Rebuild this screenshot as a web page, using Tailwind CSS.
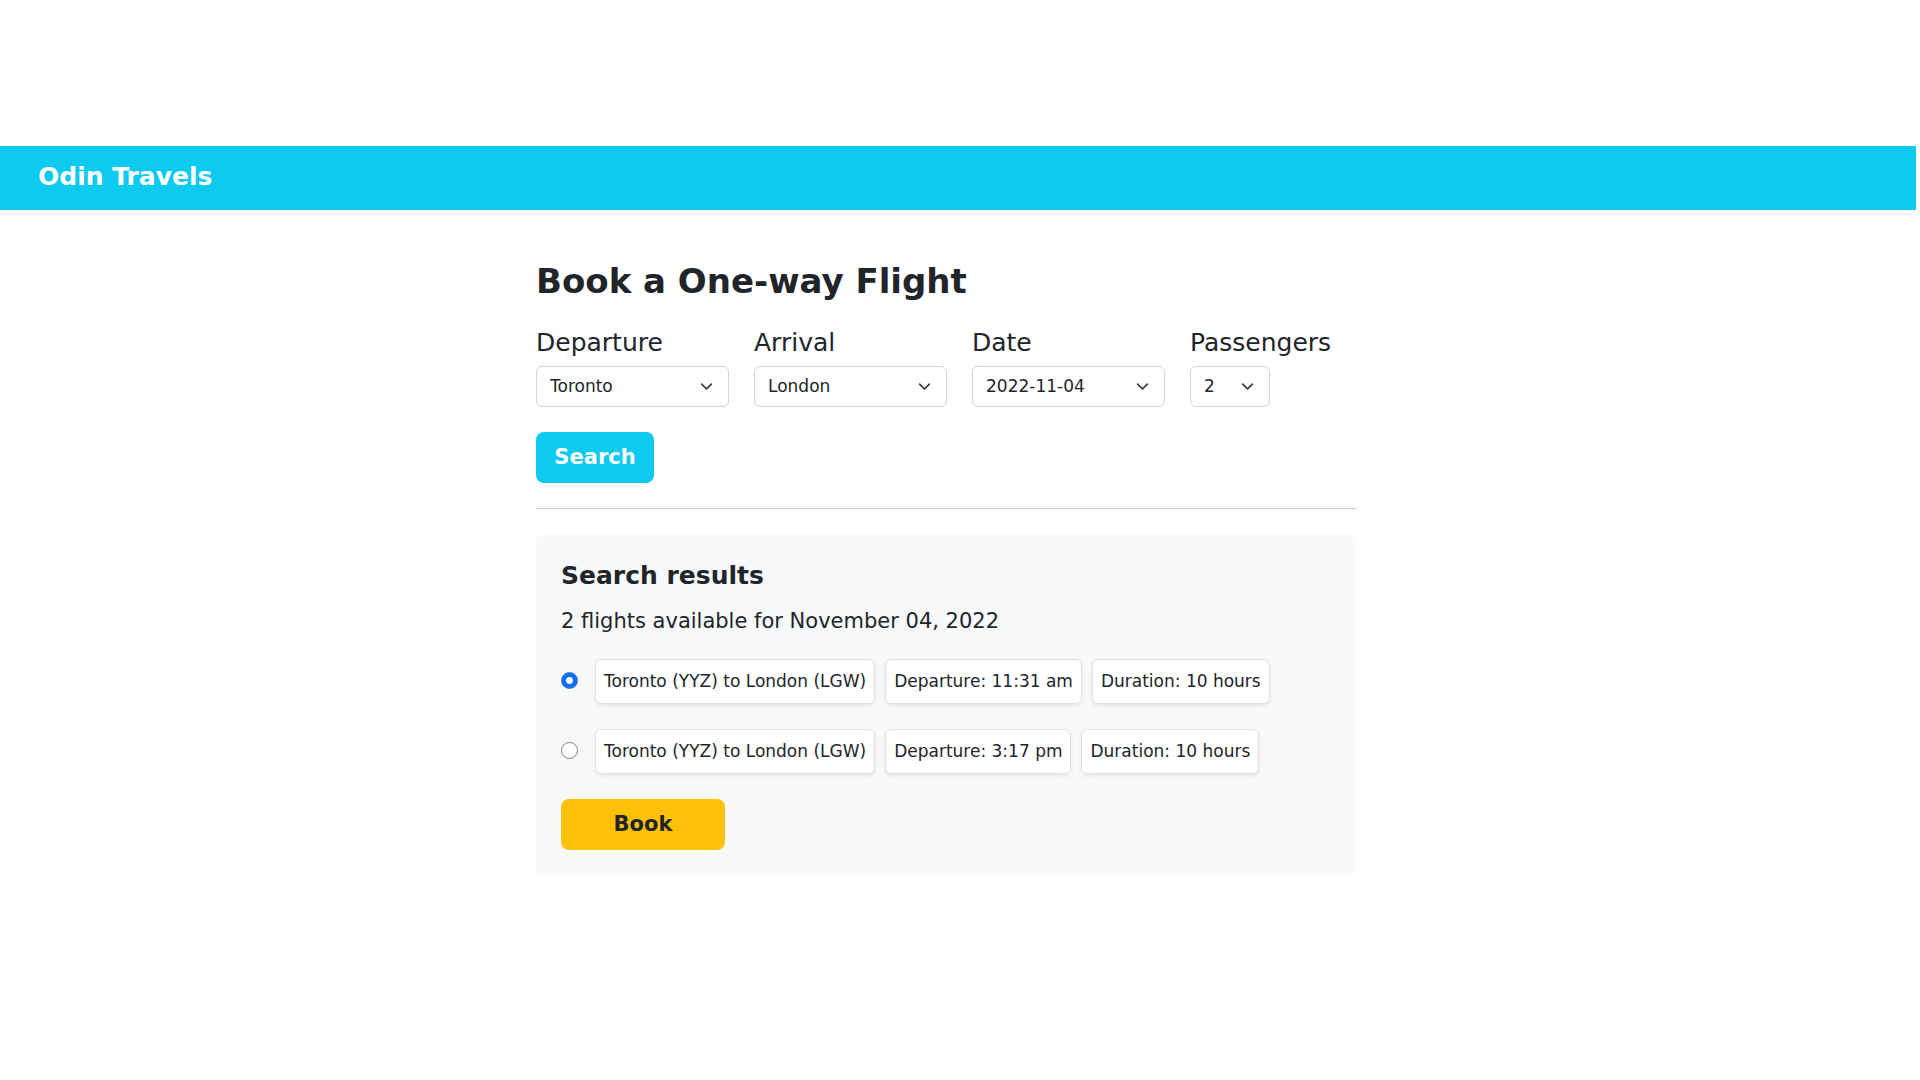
<!DOCTYPE html>
<html lang="en">
<head>
<meta charset="utf-8">
<meta name="viewport" content="width=device-width, initial-scale=1">
<title>Odin Travels</title>
<script src="https://cdn.jsdelivr.net/npm/@tailwindcss/browser@4"></script>
</head>
<body class="bg-white pt-[146px] pr-1 font-['DejaVu_Sans',sans-serif] text-[17px] leading-[25px] text-[#212529]">
  <header class="bg-[#0dcaf0] px-[38px] pt-[15px] pb-[17px]">
    <a href="#" class="text-[25px] leading-[32px] font-bold text-white block w-fit">Odin Travels</a>
  </header>

  <main class="mx-auto max-w-[844px] pt-[51px] pr-6">
    <h1 class="mb-[25px] text-[34px] leading-[40px] font-bold">Book a One-way Flight</h1>

    <form>
      <div class="flex flex-wrap gap-[25px]">
        <div class="w-[193px]">
          <label for="departure" class="mb-[6px] block text-[25px] leading-[34px]">Departure</label>
          <div class="relative">
            <select id="departure" class="block h-[41px] w-full appearance-none rounded-md border border-[#ced4da] bg-white pr-10 pl-[13px]"><option>Toronto</option></select>
            <svg class="pointer-events-none absolute top-[14px] right-4 size-[13px]" viewBox="0 0 16 16" fill="none" stroke="#343a40" stroke-width="2" stroke-linecap="round" stroke-linejoin="round"><path d="m2 5 6 6 6-6"/></svg>
          </div>
        </div>
        <div class="w-[193px]">
          <label for="arrival" class="mb-[6px] block text-[25px] leading-[34px]">Arrival</label>
          <div class="relative">
            <select id="arrival" class="block h-[41px] w-full appearance-none rounded-md border border-[#ced4da] bg-white pr-10 pl-[13px]"><option>London</option></select>
            <svg class="pointer-events-none absolute top-[14px] right-4 size-[13px]" viewBox="0 0 16 16" fill="none" stroke="#343a40" stroke-width="2" stroke-linecap="round" stroke-linejoin="round"><path d="m2 5 6 6 6-6"/></svg>
          </div>
        </div>
        <div class="w-[193px]">
          <label for="date" class="mb-[6px] block text-[25px] leading-[34px]">Date</label>
          <div class="relative">
            <select id="date" class="block h-[41px] w-full appearance-none rounded-md border border-[#ced4da] bg-white pr-10 pl-[13px]"><option>2022-11-04</option></select>
            <svg class="pointer-events-none absolute top-[14px] right-4 size-[13px]" viewBox="0 0 16 16" fill="none" stroke="#343a40" stroke-width="2" stroke-linecap="round" stroke-linejoin="round"><path d="m2 5 6 6 6-6"/></svg>
          </div>
        </div>
        <div>
          <label for="passengers" class="mb-[6px] block text-[25px] leading-[34px]">Passengers</label>
          <div class="relative w-20">
            <select id="passengers" class="block h-[41px] w-full appearance-none rounded-md border border-[#ced4da] bg-white pr-10 pl-[13px]"><option>1</option><option selected>2</option><option>3</option><option>4</option></select>
            <svg class="pointer-events-none absolute top-[14px] right-4 size-[13px]" viewBox="0 0 16 16" fill="none" stroke="#343a40" stroke-width="2" stroke-linecap="round" stroke-linejoin="round"><path d="m2 5 6 6 6-6"/></svg>
          </div>
        </div>
      </div>
      <button type="button" class="mt-[25px] block h-[51px] w-[118px] rounded-lg bg-[#0dcaf0] pb-[2px] text-[21px] leading-[32px] font-bold text-white">Search</button>
    </form>

    <hr class="mt-[25px] mb-[26px] border-t border-[#c8c9ca]">

    <section class="rounded-md bg-[#f8f9fa] p-[25px]">
      <h2 class="text-[25px] leading-[32px] font-bold">Search results</h2>
      <p class="mt-[13px] mb-[22px] text-[21px] leading-[32px]">2 flights available for November 04, 2022</p>
      <form class="flex flex-col items-start gap-[25px]">
        <div class="flex items-center">
          <input type="radio" id="flight-1" name="flight" checked class="mr-[17px] mb-[2px] size-[17px] appearance-none rounded-full border border-[#7c8085] bg-white checked:border-[#3f73bd] checked:bg-[radial-gradient(circle,white_3px,#0d6efd_4px)]">
          <label for="flight-1" class="flex flex-wrap gap-[10px]">
            <span class="rounded-md border border-[#dee2e6] bg-white px-2 py-[9px] shadow-[0_2px_4px_rgba(0,0,0,0.075)]">Toronto (YYZ) to London (LGW)</span>
            <span class="rounded-md border border-[#dee2e6] bg-white px-2 py-[9px] shadow-[0_2px_4px_rgba(0,0,0,0.075)]">Departure: 11:31 am</span>
            <span class="rounded-md border border-[#dee2e6] bg-white px-2 py-[9px] shadow-[0_2px_4px_rgba(0,0,0,0.075)]">Duration: 10 hours</span>
          </label>
        </div>
        <div class="flex items-center">
          <input type="radio" id="flight-2" name="flight" class="mr-[17px] mb-[2px] size-[17px] appearance-none rounded-full border border-[#7c8085] bg-white checked:border-[#3f73bd] checked:bg-[radial-gradient(circle,white_3px,#0d6efd_4px)]">
          <label for="flight-2" class="flex flex-wrap gap-[10px]">
            <span class="rounded-md border border-[#dee2e6] bg-white px-2 py-[9px] shadow-[0_2px_4px_rgba(0,0,0,0.075)]">Toronto (YYZ) to London (LGW)</span>
            <span class="rounded-md border border-[#dee2e6] bg-white px-2 py-[9px] shadow-[0_2px_4px_rgba(0,0,0,0.075)]">Departure: 3:17 pm</span>
            <span class="rounded-md border border-[#dee2e6] bg-white px-2 py-[9px] shadow-[0_2px_4px_rgba(0,0,0,0.075)]">Duration: 10 hours</span>
          </label>
        </div>
        <button type="button" class="h-[51px] w-[164px] rounded-lg bg-[#ffc107] pb-[2px] text-[21px] leading-[32px] font-bold">Book</button>
      </form>
    </section>
  </main>
</body>
</html>
